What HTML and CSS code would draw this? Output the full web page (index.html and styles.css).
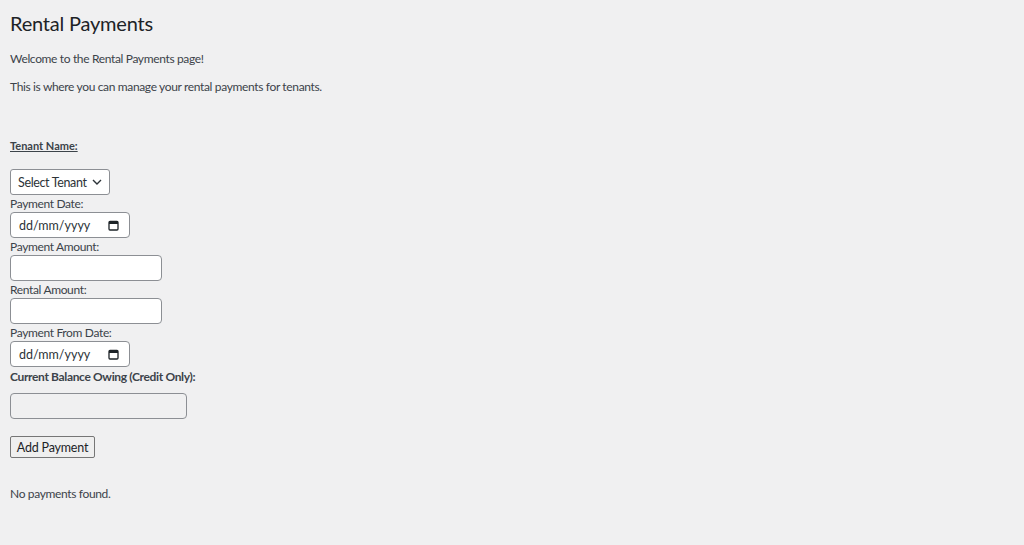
FILE: index.html
```html
<!DOCTYPE html>
<html>
<head>
<meta charset="utf-8">
<link rel="stylesheet" href="styles.css">
</head>
<body>
<div class="wrap">
  <h1 class="title">Rental Payments</h1>
  <p class="intro">Welcome to the Rental Payments page!</p>
  <p class="intro">This is where you can manage your rental payments for tenants.</p>
  <form class="form">
    <div class="tenant-label">Tenant Name:</div>
    <div class="select">Select Tenant
      <svg class="chev" width="10" height="6" viewBox="0 0 10 6"><path d="M1 1l4 4 4-4" fill="none" stroke="#2c3338" stroke-width="1.4"/></svg>
    </div>
    <label class="lbl">Payment Date:</label>
    <div class="date">dd/mm/yyyy
      <svg class="cal" width="11" height="11" viewBox="0 0 11 11"><rect x="1" y="1.5" width="9" height="8.5" rx="1" fill="none" stroke="#1d2327" stroke-width="1.3"/><rect x="1" y="1.5" width="9" height="2.5" fill="#1d2327"/></svg>
    </div>
    <label class="lbl">Payment Amount:</label>
    <div class="text-input"></div>
    <label class="lbl">Rental Amount:</label>
    <div class="text-input"></div>
    <label class="lbl">Payment From Date:</label>
    <div class="date">dd/mm/yyyy
      <svg class="cal" width="11" height="11" viewBox="0 0 11 11"><rect x="1" y="1.5" width="9" height="8.5" rx="1" fill="none" stroke="#1d2327" stroke-width="1.3"/><rect x="1" y="1.5" width="9" height="2.5" fill="#1d2327"/></svg>
    </div>
    <div class="bal-label">Current Balance Owing (Credit Only):</div>
    <div class="bal-input"></div>
    <div class="button">Add Payment</div>
  </form>
  <p class="empty">No payments found.</p>
</div>
</body>
</html>
```
FILE: styles.css
```css
html, body {
  margin: 0;
  padding: 0;
  background: #f0f0f1;
}
body {
  font-family: Lato, "Noto Sans", sans-serif;
  font-size: 12px;
  letter-spacing: -0.35px;
  color: #3c434a;
}
.wrap {
  padding: 0 10px;
  display: flex;
  flex-direction: column;
  align-items: flex-start;
}
.title {
  margin: 0;
  padding-top: 9px;
  font-size: 20px;
  letter-spacing: -0.2px;
  font-weight: 400;
  line-height: 29px;
  color: #1d2327;
}
.intro {
  margin: 0;
  line-height: 18px;
}
.intro:first-of-type { margin-top: 12px; }
.intro + .intro { margin-top: 10px; }
.form {
  display: flex;
  flex-direction: column;
  align-items: flex-start;
  margin-top: 42px;
}
.tenant-label {
  font-size: 11px;
  letter-spacing: 0;
  font-weight: 700;
  text-decoration: underline;
  line-height: 16px;
}
.select {
  margin-top: 15px;
  box-sizing: border-box;
  width: 100px;
  height: 26px;
  background: #fff;
  border: 1px solid #8c8f94;
  border-radius: 3px;
  display: flex;
  align-items: center;
  padding-left: 7px;
  color: #2c3338;
  gap: 5px;
  white-space: nowrap;
  font-size: 12.5px;
}
.lbl {
  margin-top: 1px;
  line-height: 16px;
}
.date {
  box-sizing: border-box;
  width: 120px;
  height: 26px;
  background: #fff;
  border: 1px solid #8c8f94;
  border-radius: 4px;
  display: flex;
  align-items: center;
  justify-content: space-between;
  padding: 0 10px 0 8px;
  color: #2c3338;
  font-size: 12.5px;
  letter-spacing: 0;
}
.text-input {
  box-sizing: border-box;
  width: 152px;
  height: 26px;
  background: #fff;
  border: 1px solid #8c8f94;
  border-radius: 4px;
}
.bal-label {
  margin-top: 2px;
  font-weight: 700;
  line-height: 16px;
}
.bal-input {
  margin-top: 8px;
  box-sizing: border-box;
  width: 177px;
  height: 26px;
  background: #f0f0f1;
  border: 1px solid #8c8f94;
  border-radius: 4px;
}
.button {
  margin-top: 17px;
  box-sizing: border-box;
  width: 85px;
  height: 22px;
  padding: 0;
  display: flex;
  align-items: center;
  justify-content: center;
  white-space: nowrap;
  background: #efefef;
  border: 1px solid #767676;
  border-radius: 2px;
  color: #1d2327;
  font-size: 12.5px;
  letter-spacing: -0.2px;
}
.empty {
  margin: 27px 0 0;
  line-height: 18px;
}
```
